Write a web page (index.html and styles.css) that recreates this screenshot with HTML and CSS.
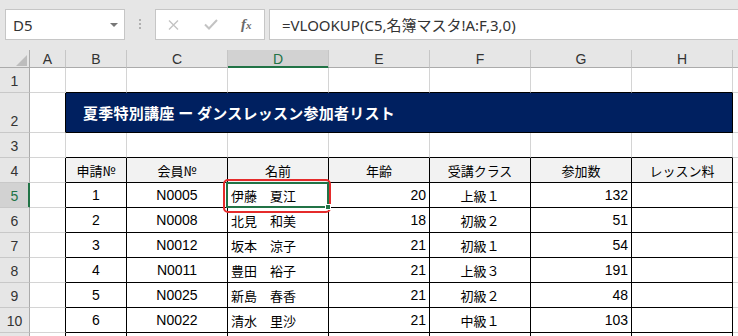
FILE: index.html
```html
<!DOCTYPE html>
<html lang="ja">
<head>
    <meta charset="UTF-8">
    <title>ダンスレッスン参加者リスト</title>
    <link rel="stylesheet" href="styles.css">
</head>
<body>

<div class="formula-bar">
    <div class="name-box">
        <span>D5</span>
        <span class="caret"></span>
    </div>
    <div class="grip"><i></i><i></i><i></i></div>
    <div class="fx-buttons">
        <svg class="btn-cancel" width="11" height="10" viewBox="0 0 11 10">
            <path d="M1 0.5 L10 9.5 M10 0.5 L1 9.5" stroke="#c3c3c3" stroke-width="1.4" fill="none"/>
        </svg>
        <svg class="btn-enter" width="14" height="11" viewBox="0 0 14 11">
            <path d="M1 5.5 L5 9.5 L13 1" stroke="#c3c3c3" stroke-width="2" fill="none"/>
        </svg>
        <span class="btn-fx">f<small>x</small></span>
    </div>
    <div class="formula">=VLOOKUP(C5,名簿マスタ!A:F,3,0)</div>
</div>

<div class="sheet">
    <!-- column headings -->
    <div class="c corner"><span class="tri"></span></div>
    <div class="c ch">A</div>
    <div class="c ch">B</div>
    <div class="c ch">C</div>
    <div class="c ch active">D</div>
    <div class="c ch">E</div>
    <div class="c ch">F</div>
    <div class="c ch">G</div>
    <div class="c ch">H</div>
    <div class="c ch"></div>

    <!-- row 1 -->
    <div class="c rh">1</div>
    <div class="c"></div>
    <div class="c tb"></div>
    <div class="c tb"></div>
    <div class="c tb"></div>
    <div class="c tb"></div>
    <div class="c tb"></div>
    <div class="c tb"></div>
    <div class="c tb"></div>
    <div class="c"></div>

    <!-- row 2 -->
    <div class="c rh">2</div>
    <div class="c tr"></div>
    <div class="c title">夏季特別講座 ー ダンスレッスン参加者リスト</div>
    <div class="c"></div>

    <!-- row 3 -->
    <div class="c rh">3</div>
    <div class="c"></div>
    <div class="c tb"></div>
    <div class="c tb"></div>
    <div class="c tb"></div>
    <div class="c tb"></div>
    <div class="c tb"></div>
    <div class="c tb"></div>
    <div class="c tb"></div>
    <div class="c"></div>

    <!-- row 4 -->
    <div class="c rh">4</div>
    <div class="c tr"></div>
    <div class="c t th jp">申請№</div>
    <div class="c t th jp">会員№</div>
    <div class="c t th jp">名前</div>
    <div class="c t th jp">年齢</div>
    <div class="c t th jp">受講クラス</div>
    <div class="c t th jp">参加数</div>
    <div class="c t th jp">レッスン料</div>
    <div class="c"></div>

    <!-- row 5 -->
    <div class="c rh active">5</div>
    <div class="c tr"></div>
    <div class="c t mid">1</div>
    <div class="c t mid">N0005</div>
    <div class="c t jp sel">伊藤　夏江<span class="handle"></span><span class="callout"></span></div>
    <div class="c t num">20</div>
    <div class="c t mid jp">上級１</div>
    <div class="c t num">132</div>
    <div class="c t"></div>
    <div class="c"></div>

    <!-- row 6 -->
    <div class="c rh">6</div>
    <div class="c tr"></div>
    <div class="c t mid">2</div>
    <div class="c t mid">N0008</div>
    <div class="c t jp">北見　和美</div>
    <div class="c t num">18</div>
    <div class="c t mid jp">初級２</div>
    <div class="c t num">51</div>
    <div class="c t"></div>
    <div class="c"></div>

    <!-- row 7 -->
    <div class="c rh">7</div>
    <div class="c tr"></div>
    <div class="c t mid">3</div>
    <div class="c t mid">N0012</div>
    <div class="c t jp">坂本　涼子</div>
    <div class="c t num">21</div>
    <div class="c t mid jp">初級１</div>
    <div class="c t num">54</div>
    <div class="c t"></div>
    <div class="c"></div>

    <!-- row 8 -->
    <div class="c rh">8</div>
    <div class="c tr"></div>
    <div class="c t mid">4</div>
    <div class="c t mid">N0011</div>
    <div class="c t jp">豊田　裕子</div>
    <div class="c t num">21</div>
    <div class="c t mid jp">上級３</div>
    <div class="c t num">191</div>
    <div class="c t"></div>
    <div class="c"></div>

    <!-- row 9 -->
    <div class="c rh">9</div>
    <div class="c tr"></div>
    <div class="c t mid">5</div>
    <div class="c t mid">N0025</div>
    <div class="c t jp">新島　春香</div>
    <div class="c t num">21</div>
    <div class="c t mid jp">初級２</div>
    <div class="c t num">48</div>
    <div class="c t"></div>
    <div class="c"></div>

    <!-- row 10 -->
    <div class="c rh">10</div>
    <div class="c tr"></div>
    <div class="c t mid">6</div>
    <div class="c t mid">N0022</div>
    <div class="c t jp">清水　里沙</div>
    <div class="c t num">21</div>
    <div class="c t mid jp">中級１</div>
    <div class="c t num">103</div>
    <div class="c t"></div>
    <div class="c"></div>

    <!-- row 11, only its top edge shows -->
    <div class="c rh"></div>
    <div class="c tr"></div>
    <div class="c t"></div>
    <div class="c t"></div>
    <div class="c t"></div>
    <div class="c t"></div>
    <div class="c t"></div>
    <div class="c t"></div>
    <div class="c t"></div>
    <div class="c"></div>
</div>

</body>
</html>
```

FILE: styles.css
```css
body {
    margin: 0;
    width: 738px;
    height: 336px;
    overflow: hidden;
    background-color: #FFFFFF;
    font-family: "Liberation Sans", "Noto Sans CJK JP", sans-serif;
    color: #000000;
}

/* formula bar */

.formula-bar {
    height: 50px;
    background-color: #E6E6E6;
    display: flex;
    align-items: flex-start;
    padding-top: 9px;
    box-sizing: border-box;
}

.name-box {
    margin-left: 5px;
    width: 120px;
    height: 31px;
    box-sizing: border-box;
    border: 1px solid #C6C6C6;
    background-color: #FFFFFF;
    display: flex;
    align-items: center;
    justify-content: space-between;
    padding: 0 6px 0 7px;
    font-family: "Noto Sans", sans-serif;
    font-size: 15px;
    color: #333333;
}

.caret {
    width: 0;
    height: 0;
    border-left: 4px solid transparent;
    border-right: 4px solid transparent;
    border-top: 4px solid #777777;
}

.grip {
    width: 30px;
    height: 31px;
    display: flex;
    flex-direction: column;
    align-items: center;
    gap: 2px;
    padding-top: 10px;
    box-sizing: border-box;
}

.grip i {
    width: 2px;
    height: 2px;
    background-color: #B0B0B0;
}

.fx-buttons {
    width: 110px;
    height: 31px;
    box-sizing: border-box;
    border: 1px solid #C6C6C6;
    background-color: #FFFFFF;
    display: flex;
    align-items: center;
    padding-left: 12px;
}

.btn-enter {
    margin-left: 25px;
}

.btn-fx {
    margin-left: 23px;
    font-family: "Liberation Serif", serif;
    font-style: italic;
    font-weight: bold;
    font-size: 15px;
    color: #6A6A6A;
}

.btn-fx small {
    font-size: 11px;
}

.formula {
    flex: 1;
    margin-left: 4px;
    height: 31px;
    box-sizing: border-box;
    border: 1px solid #C6C6C6;
    border-right: none;
    background-color: #FFFFFF;
    display: flex;
    align-items: center;
    padding-left: 12px;
    font-family: "Noto Sans", "Noto Sans CJK JP", sans-serif;
    font-size: 15px;
    color: #333333;
    white-space: nowrap;
}

/* sheet grid */

.sheet {
    display: grid;
    grid-template-columns: 30px 36px 61px repeat(6, 101px) 1fr;
    grid-template-rows: 18px 25px 40px repeat(8, 25px) 4px;
}

.c {
    box-sizing: border-box;
    border-right: 1px solid #D4D4D4;
    border-bottom: 1px solid #D4D4D4;
    display: flex;
    align-items: center;
    padding: 0 3px;
    font-size: 14px;
    white-space: nowrap;
    overflow: hidden;
}

.corner {
    background-color: #E6E6E6;
    border-right-color: #ABABAB;
    border-bottom-color: #ABABAB;
    justify-content: flex-end;
    align-items: flex-end;
    padding: 0 2px 1px 0;
}

.tri {
    width: 0;
    height: 0;
    border-left: 11px solid transparent;
    border-bottom: 11px solid #BDBDBD;
}

.ch {
    background-color: #E6E6E6;
    border-right-color: #C6C6C6;
    border-bottom-color: #ABABAB;
    justify-content: center;
    color: #333333;
    padding-top: 1px;
}

.ch.active {
    background-color: #D2D2D2;
    color: #217346;
    border-bottom-color: #217346;
    box-shadow: inset 0 -1px 0 #217346;
}

.rh {
    background-color: #E6E6E6;
    border-right-color: #ABABAB;
    border-bottom-color: #C8C8C8;
    justify-content: center;
    align-items: flex-end;
    line-height: 16px;
    padding-bottom: 3px;
    color: #333333;
}

.rh.active {
    background-color: #D2D2D2;
    color: #217346;
    border-right-color: #217346;
    box-shadow: inset -1px 0 0 #217346;
}

/* table borders */

.tb {
    border-bottom-color: #000000;
}

.tr {
    border-right-color: #000000;
}

.t {
    border-right-color: #000000;
    border-bottom-color: #000000;
}

.th {
    background-color: #F2F2F2;
    justify-content: center;
}

.jp {
    font-family: "Noto Sans CJK JP", sans-serif;
    font-size: 13px;
}

.mid {
    justify-content: center;
}

.num {
    justify-content: flex-end;
    padding-right: 3px;
}

.title {
    grid-column: 3 / 10;
    background-color: #002060;
    border-right-color: #000000;
    border-bottom-color: #000000;
    color: #FFFFFF;
    font-family: "Noto Sans CJK JP", sans-serif;
    font-weight: bold;
    font-size: 15px;
    letter-spacing: 0.25px;
    padding-left: 17px;
}

/* active cell */

.sel {
    position: relative;
    overflow: visible;
    z-index: 1;
}

.sel::after {
    content: "";
    position: absolute;
    top: -1px;
    left: -2px;
    right: -1px;
    bottom: -1px;
    border: 2px solid #217346;
}

.handle {
    position: absolute;
    right: -3px;
    bottom: -3px;
    width: 4px;
    height: 4px;
    background-color: #217346;
    border: 1px solid #FFFFFF;
    z-index: 2;
}

.callout {
    position: absolute;
    left: -5px;
    top: -4px;
    width: 108px;
    height: 34px;
    box-sizing: border-box;
    border: 2px solid #E52B2B;
    border-radius: 5px;
}
```
